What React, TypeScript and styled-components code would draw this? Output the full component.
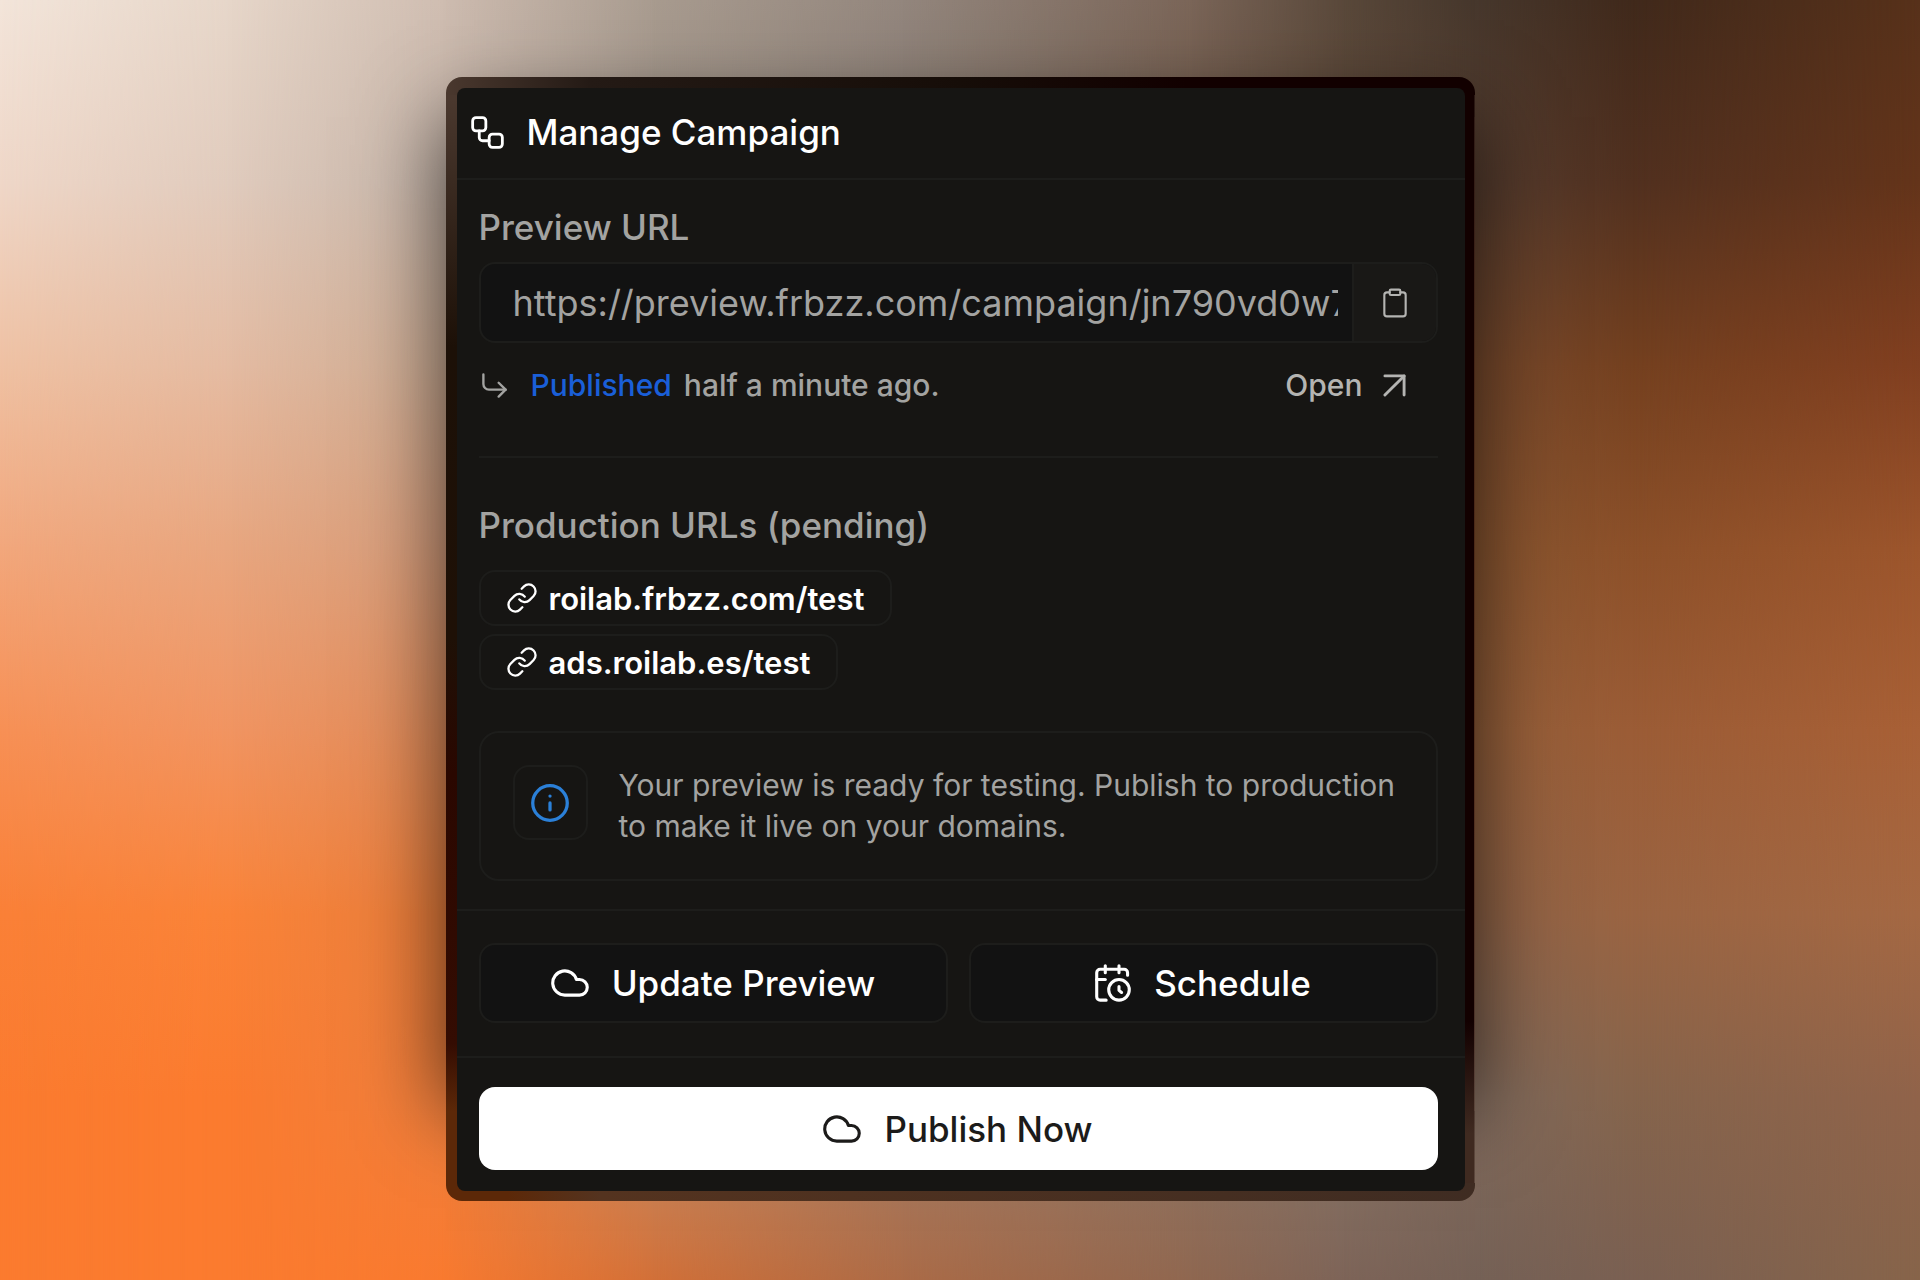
import React from "react";
import styled, { createGlobalStyle } from "styled-components";

const GlobalStyle = createGlobalStyle`
  *, *::before, *::after { box-sizing: border-box; }
  body { margin: 0; font-family: Inter, "Liberation Sans", sans-serif; background: #8a6a55; }
  button, input { font: inherit; color: inherit; }
  svg { display: block; flex: none; }
`;

const line = "#1d1d1b";
const muted = "#a3a3a1";

const Page = styled.main`
  display: grid;
  justify-items: center;
  align-items: start;
  min-height: 100vh;
`;

/* Backdrop: vertical gradients blended into each other from left to right. */
const Backdrop = styled.div`
  grid-area: 1 / 1;
  display: grid;
  width: 100%;
  height: 100%;
`;

const Wash = styled.div<{ $from: number; $to: number; $colors: string[] }>`
  grid-area: 1 / 1;
  background: linear-gradient(to bottom, ${(p) => p.$colors.join(", ")});
  mask-image: ${(p) =>
    p.$to === 0
      ? "none"
      : `linear-gradient(to right, transparent ${p.$from}%, #000 ${p.$to}%)`};
`;

/* Eight evenly spaced stops per column, top to bottom. */
const washes = [
  { at: 0, colors: ["#f3e5da", "#efd7c8", "#efc1a3", "#f2a77c", "#f79055", "#fa8037", "#fb7b2f", "#fb7b2f"] },
  { at: 12, colors: ["#e6d6c9", "#e0cbbd", "#e4bba2", "#e8a67f", "#f19461", "#fa8338", "#fb7b2f", "#fb7b2f"] },
  { at: 23, colors: ["#cfbdb1", "#c6b5a9", "#ccac94", "#d59d7c", "#df8c5b", "#e97e3d", "#f07f3d", "#f97a2f"] },
  { at: 34, colors: ["#a99c90", "#9f9287", "#9a8778", "#a0806a", "#aa7a58", "#b87c54", "#c48e6a", "#d27038"] },
  { at: 47, colors: ["#94877e", "#867a70", "#826e60", "#8c6c54", "#946a4e", "#9c7254", "#a5806a", "#ab6b47"] },
  { at: 62, colors: ["#7b6659", "#6e5848", "#765238", "#85583a", "#8f5f3f", "#90684c", "#907868", "#8f6750"] },
  { at: 70, colors: ["#5a493b", "#5c4636", "#784e30", "#86562f", "#92603c", "#8e664a", "#8a7769", "#7d6458"] },
  { at: 77, colors: ["#46372c", "#563d2f", "#784a2d", "#895631", "#95603b", "#8f6347", "#806a5c", "#756156"] },
  { at: 85, colors: ["#40291b", "#51301f", "#74401f", "#8c5029", "#9b5c36", "#9a6442", "#85644c", "#7a6052"] },
  { at: 100, colors: ["#57311a", "#64341a", "#813f20", "#9c552c", "#a86036", "#a46843", "#90634a", "#87644a"] },
];

const Frame = styled.div`
  grid-area: 1 / 1;
  position: relative;
  width: 100%;
  max-width: 1029px;
  margin: 77px 0 78px;
  padding: 11px 10px 10px 11px;
  z-index: 1;

  /* Soft shadow that stays clear of the lower corners. */
  &::before {
    content: "";
    position: absolute;
    inset: 40px 0 90px;
    box-shadow: 0 0 80px rgba(0, 0, 0, 0.68);
    z-index: -2;
  }

  /* Tinted rim around the card. */
  &::after {
    content: "";
    position: absolute;
    inset: 0;
    border-radius: 16px;
    background:
      linear-gradient(to right, #5c2808 6%, #54331f 15%, #3f2c22) bottom / 100% 18px no-repeat,
      linear-gradient(to right, #4a382e, #241a15 14%, #160d08 50%, #120000 72%) top / 100% 18px no-repeat,
      linear-gradient(to bottom, #4a382e 2%, #1c1007 24%, #1e1006 50%, #2a0700 62%, #340c02 86%, #5c2808 92%) left / 50% 100% no-repeat,
      linear-gradient(to bottom, #120000 84%, #3f2a20 94%) right / 50% 100% no-repeat;
    z-index: -1;
  }
`;

const Card = styled.section`
  border-radius: 8px;
  background: #161513;
  color: #ffffff;
  overflow: hidden;
`;

const Header = styled.header`
  display: flex;
  align-items: center;
  gap: 23px;
  height: 92px;
  padding: 0 14px 2px;
  border-bottom: 2px solid ${line};
`;

const Title = styled.h1`
  margin: 0;
  font-size: 35px;
  font-weight: 500;
  line-height: 44px;
`;

const Section = styled.div`
  padding: 26px 27px 28px 22px;
`;

const Label = styled.label`
  display: block;
  font-size: 35px;
  font-weight: 500;
  line-height: 42px;
  color: ${muted};
`;

const Heading = styled.h2`
  margin: 0;
  font-size: 35px;
  font-weight: 500;
  line-height: 42px;
  color: ${muted};
`;

const UrlGroup = styled.div`
  display: flex;
  height: 81px;
  margin-top: 14px;
  border: 2px solid ${line};
  border-radius: 16px;
  background: #121212;
  overflow: hidden;
`;

const UrlInput = styled.input`
  flex: 1;
  min-width: 0;
  margin: 0 14px 0 32px;
  padding: 0;
  border: 0;
  outline: 0;
  background: transparent;
  font-size: 36px;
  color: ${muted};
`;

const CopyButton = styled.button`
  display: grid;
  place-items: center;
  width: 84px;
  padding: 0;
  border: 0;
  border-left: 2px solid ${line};
  background: #191816;
  color: #b4b4b2;
  cursor: pointer;
`;

const StatusRow = styled.div`
  display: flex;
  align-items: center;
  margin-top: 24px;
  padding: 0 32px 0 3px;
  font-size: 30px;
  font-weight: 500;
  line-height: 36px;
  color: ${muted};
`;

const StatusText = styled.p`
  display: flex;
  flex: 1;
  gap: 12px;
  margin: 0 0 0 24px;
`;

const Published = styled.span`
  color: #1a5fd8;
`;

const OpenLink = styled.a`
  display: flex;
  align-items: center;
  gap: 20px;
  color: #b4b4b2;
  text-decoration: none;
`;

const Divider = styled.hr`
  height: 2px;
  margin: 53px 0 46px;
  border: 0;
  background: ${line};
`;

const Chips = styled.div`
  display: flex;
  flex-direction: column;
  align-items: flex-start;
  gap: 8px;
  margin-top: 24px;
`;

const Chip = styled.a`
  display: flex;
  align-items: center;
  gap: 12px;
  height: 56px;
  padding: 0 26px;
  border: 2px solid ${line};
  border-radius: 16px;
  font-size: 31px;
  font-weight: 600;
  color: #ffffff;
  text-decoration: none;
`;

const Notice = styled.div`
  display: flex;
  align-items: flex-start;
  gap: 31px;
  margin-top: 41px;
  padding: 32px;
  border: 2px solid ${line};
  border-radius: 20px;
`;

const NoticeIcon = styled.div`
  display: grid;
  place-items: center;
  flex: none;
  width: 75px;
  height: 75px;
  border: 2px solid ${line};
  border-radius: 16px;
  color: #2b80d8;
`;

const NoticeText = styled.p`
  margin: 0;
  font-size: 30px;
  line-height: 41px;
  color: ${muted};
`;

const Actions = styled.div`
  display: grid;
  grid-template-columns: 1fr 1fr;
  gap: 21px;
  padding: 32px 27px 33px 22px;
  border-top: 2px solid ${line};
`;

const Footer = styled.footer`
  display: grid;
  padding: 29px 27px 21px 22px;
  border-top: 2px solid ${line};
`;

const Button = styled.button<{ $primary?: boolean }>`
  display: flex;
  align-items: center;
  justify-content: center;
  gap: 23px;
  height: ${(p) => (p.$primary ? 83 : 80)}px;
  border: ${(p) => (p.$primary ? "0" : `2px solid ${line}`)};
  border-radius: 16px;
  background: ${(p) => (p.$primary ? "#ffffff" : "#121212")};
  color: ${(p) => (p.$primary ? "#1c1b1a" : "#ffffff")};
  font-size: 35px;
  font-weight: 500;
  cursor: pointer;
`;

type IconProps = {
  w: number;
  h: number;
  box: string;
  stroke?: number;
  children: React.ReactNode;
};

const Icon = ({ w, h, box, stroke = 1.6, children }: IconProps) => (
  <svg
    width={w}
    height={h}
    viewBox={box}
    fill="none"
    stroke="currentColor"
    strokeWidth={stroke}
    strokeLinecap="round"
    strokeLinejoin="round"
    aria-hidden="true"
  >
    {children}
  </svg>
);

const WorkflowIcon = () => (
  <Icon w={33} h={33} box="2 2 20 20" stroke={1.7}>
    <rect x="3" y="3" width="8" height="8" rx="2" />
    <path d="M7 11v4a2 2 0 0 0 2 2h4" />
    <rect x="13" y="13" width="8" height="8" rx="2" />
  </Icon>
);

const ClipboardIcon = () => (
  <Icon w={32} h={32} box="0 0 24 24">
    <rect x="8" y="2" width="8" height="4" rx="1" />
    <path d="M16 4h2a2 2 0 0 1 2 2v14a2 2 0 0 1-2 2H6a2 2 0 0 1-2-2V6a2 2 0 0 1 2-2h2" />
  </Icon>
);

const CornerIcon = () => (
  <Icon w={25} h={25} box="3 3 18 18" stroke={1.7}>
    <path d="M4 4v7a4 4 0 0 0 4 4h12" />
    <path d="m15 10 5 5-5 5" />
  </Icon>
);

const OpenIcon = () => (
  <Icon w={23} h={23} box="6 6 12 12" stroke={1.5}>
    <path d="M7 7h10v10" />
    <path d="M7 17 17 7" />
  </Icon>
);

const LinkIcon = () => (
  <Icon w={30} h={30} box="1 1 22 22" stroke={1.7}>
    <path d="M10 13a5 5 0 0 0 7.54.54l3-3a5 5 0 0 0-7.07-7.07l-1.72 1.71" />
    <path d="M14 11a5 5 0 0 0-7.54-.54l-3 3a5 5 0 0 0 7.07 7.07l1.71-1.71" />
  </Icon>
);

const InfoIcon = () => (
  <Icon w={38} h={38} box="1 1 22 22" stroke={1.9}>
    <circle cx="12" cy="12" r="10" />
    <path d="M12 16v-4" />
    <path d="M12 8h.01" />
  </Icon>
);

const CloudIcon = () => (
  <Icon w={38} h={28} box="1 4 22 16" stroke={1.8}>
    <path d="M17.5 19H9a7 7 0 1 1 6.71-9h1.79a4.5 4.5 0 1 1 0 9Z" />
  </Icon>
);

const ScheduleIcon = () => (
  <Icon w={36} h={38} box="2 1 21 22" stroke={1.8}>
    <path d="M21 7.5V6a2 2 0 0 0-2-2H5a2 2 0 0 0-2 2v14a2 2 0 0 0 2 2h3.5" />
    <path d="M16 2v4" />
    <path d="M8 2v4" />
    <path d="M3 10h5" />
    <path d="M17.5 17.5 16 16.3V14" />
    <circle cx="16" cy="16" r="6" />
  </Icon>
);

const domains = ["roilab.frbzz.com/test", "ads.roilab.es/test"];

export default function App() {
  return (
    <Page>
      <GlobalStyle />
      <Backdrop>
        {washes.map((w, i) => (
          <Wash key={w.at} $from={i ? washes[i - 1].at : 0} $to={w.at} $colors={w.colors} />
        ))}
      </Backdrop>
      <Frame>
        <Card>
          <Header>
            <WorkflowIcon />
            <Title>Manage Campaign</Title>
          </Header>
          <Section>
            <Label htmlFor="preview-url">Preview URL</Label>
            <UrlGroup>
              <UrlInput
                id="preview-url"
                type="text"
                readOnly
                value="https://preview.frbzz.com/campaign/jn790vd0w7"
              />
              <CopyButton type="button" aria-label="Copy preview URL">
                <ClipboardIcon />
              </CopyButton>
            </UrlGroup>
            <StatusRow>
              <CornerIcon />
              <StatusText>
                <Published>Published</Published>
                <span>half a minute ago.</span>
              </StatusText>
              <OpenLink href="#open">
                Open
                <OpenIcon />
              </OpenLink>
            </StatusRow>
            <Divider />
            <Heading>Production URLs (pending)</Heading>
            <Chips>
              {domains.map((d) => (
                <Chip key={d} href={`#${d}`}>
                  <LinkIcon />
                  {d}
                </Chip>
              ))}
            </Chips>
            <Notice>
              <NoticeIcon>
                <InfoIcon />
              </NoticeIcon>
              <NoticeText>
                Your preview is ready for testing. Publish to production to make it live on your domains.
              </NoticeText>
            </Notice>
          </Section>
          <Actions>
            <Button type="button">
              <CloudIcon />
              Update Preview
            </Button>
            <Button type="button">
              <ScheduleIcon />
              Schedule
            </Button>
          </Actions>
          <Footer>
            <Button type="button" $primary>
              <CloudIcon />
              Publish Now
            </Button>
          </Footer>
        </Card>
      </Frame>
    </Page>
  );
}
